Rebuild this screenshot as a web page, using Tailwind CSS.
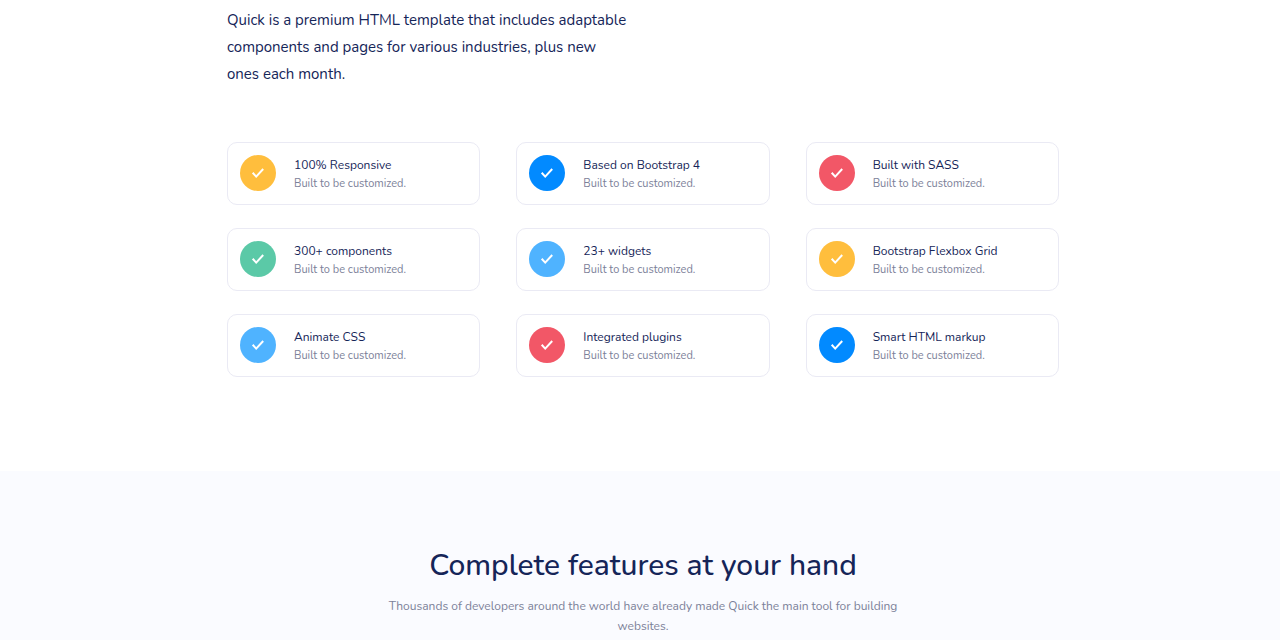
<!DOCTYPE html>
<html lang="en">
<head>
<meta charset="utf-8">
<meta name="viewport" content="width=device-width, initial-scale=1">
<title>Quick</title>
<script src="https://cdn.jsdelivr.net/npm/@tailwindcss/browser@4"></script>
</head>
<body class="bg-white font-['Nunito','Noto_Sans',sans-serif] text-[#152558]">
<svg class="hidden" aria-hidden="true"><symbol id="check" viewBox="0 0 14 14"><path d="M1.7 6.8 5.2 10.6 12.2 3" fill="none" stroke="white" stroke-width="2"/></symbol></svg>
<main>
  <section class="pt-[7px] pb-[94px] pl-1.5">
    <div class="mx-auto max-w-[832px]">
      <p class="max-w-[404px] text-[15px] leading-[27px]">Quick is a premium HTML template that includes adaptable components and pages for various industries, plus new ones each month.</p>
      <ul class="mt-[54px] grid grid-cols-3 gap-x-9 gap-y-[23px]">
        <li class="flex items-start gap-[18px] rounded-[10px] border border-[#eaeaf4] p-3"><span class="flex size-9 shrink-0 items-center justify-center rounded-full bg-[#ffbe3d]"><svg class="size-3.5"><use href="#check"/></svg></span><div><h2 class="text-[12px] leading-5">100% Responsive</h2><p class="text-[11px] leading-[17px] text-[#7c8199]">Built to be customized.</p></div></li>
        <li class="flex items-start gap-[18px] rounded-[10px] border border-[#eaeaf4] p-3"><span class="flex size-9 shrink-0 items-center justify-center rounded-full bg-[#028aff]"><svg class="size-3.5"><use href="#check"/></svg></span><div><h2 class="text-[12px] leading-5">Based on Bootstrap 4</h2><p class="text-[11px] leading-[17px] text-[#7c8199]">Built to be customized.</p></div></li>
        <li class="flex items-start gap-[18px] rounded-[10px] border border-[#eaeaf4] p-3"><span class="flex size-9 shrink-0 items-center justify-center rounded-full bg-[#f25767]"><svg class="size-3.5"><use href="#check"/></svg></span><div><h2 class="text-[12px] leading-5">Built with SASS</h2><p class="text-[11px] leading-[17px] text-[#7c8199]">Built to be customized.</p></div></li>
        <li class="flex items-start gap-[18px] rounded-[10px] border border-[#eaeaf4] p-3"><span class="flex size-9 shrink-0 items-center justify-center rounded-full bg-[#5bc9a7]"><svg class="size-3.5"><use href="#check"/></svg></span><div><h2 class="text-[12px] leading-5">300+ components</h2><p class="text-[11px] leading-[17px] text-[#7c8199]">Built to be customized.</p></div></li>
        <li class="flex items-start gap-[18px] rounded-[10px] border border-[#eaeaf4] p-3"><span class="flex size-9 shrink-0 items-center justify-center rounded-full bg-[#4fb3ff]"><svg class="size-3.5"><use href="#check"/></svg></span><div><h2 class="text-[12px] leading-5">23+ widgets</h2><p class="text-[11px] leading-[17px] text-[#7c8199]">Built to be customized.</p></div></li>
        <li class="flex items-start gap-[18px] rounded-[10px] border border-[#eaeaf4] p-3"><span class="flex size-9 shrink-0 items-center justify-center rounded-full bg-[#ffbe3d]"><svg class="size-3.5"><use href="#check"/></svg></span><div><h2 class="text-[12px] leading-5">Bootstrap Flexbox Grid</h2><p class="text-[11px] leading-[17px] text-[#7c8199]">Built to be customized.</p></div></li>
        <li class="flex items-start gap-[18px] rounded-[10px] border border-[#eaeaf4] p-3"><span class="flex size-9 shrink-0 items-center justify-center rounded-full bg-[#4fb3ff]"><svg class="size-3.5"><use href="#check"/></svg></span><div><h2 class="text-[12px] leading-5">Animate CSS</h2><p class="text-[11px] leading-[17px] text-[#7c8199]">Built to be customized.</p></div></li>
        <li class="flex items-start gap-[18px] rounded-[10px] border border-[#eaeaf4] p-3"><span class="flex size-9 shrink-0 items-center justify-center rounded-full bg-[#f25767]"><svg class="size-3.5"><use href="#check"/></svg></span><div><h2 class="text-[12px] leading-5">Integrated plugins</h2><p class="text-[11px] leading-[17px] text-[#7c8199]">Built to be customized.</p></div></li>
        <li class="flex items-start gap-[18px] rounded-[10px] border border-[#eaeaf4] p-3"><span class="flex size-9 shrink-0 items-center justify-center rounded-full bg-[#028aff]"><svg class="size-3.5"><use href="#check"/></svg></span><div><h2 class="text-[12px] leading-5">Smart HTML markup</h2><p class="text-[11px] leading-[17px] text-[#7c8199]">Built to be customized.</p></div></li>
      </ul>
    </div>
  </section>
  <section class="bg-[#fafbff] pt-[75px] pb-1 pl-1.5 text-center">
    <h2 class="text-[30px] leading-10 font-medium">Complete features at your hand</h2>
    <p class="mx-auto mt-2.5 max-w-[520px] text-[12px] leading-5 text-[#7c8199]">Thousands of developers around the world have already made Quick the main tool for building websites.</p>
  </section>
</main>
</body>
</html>
